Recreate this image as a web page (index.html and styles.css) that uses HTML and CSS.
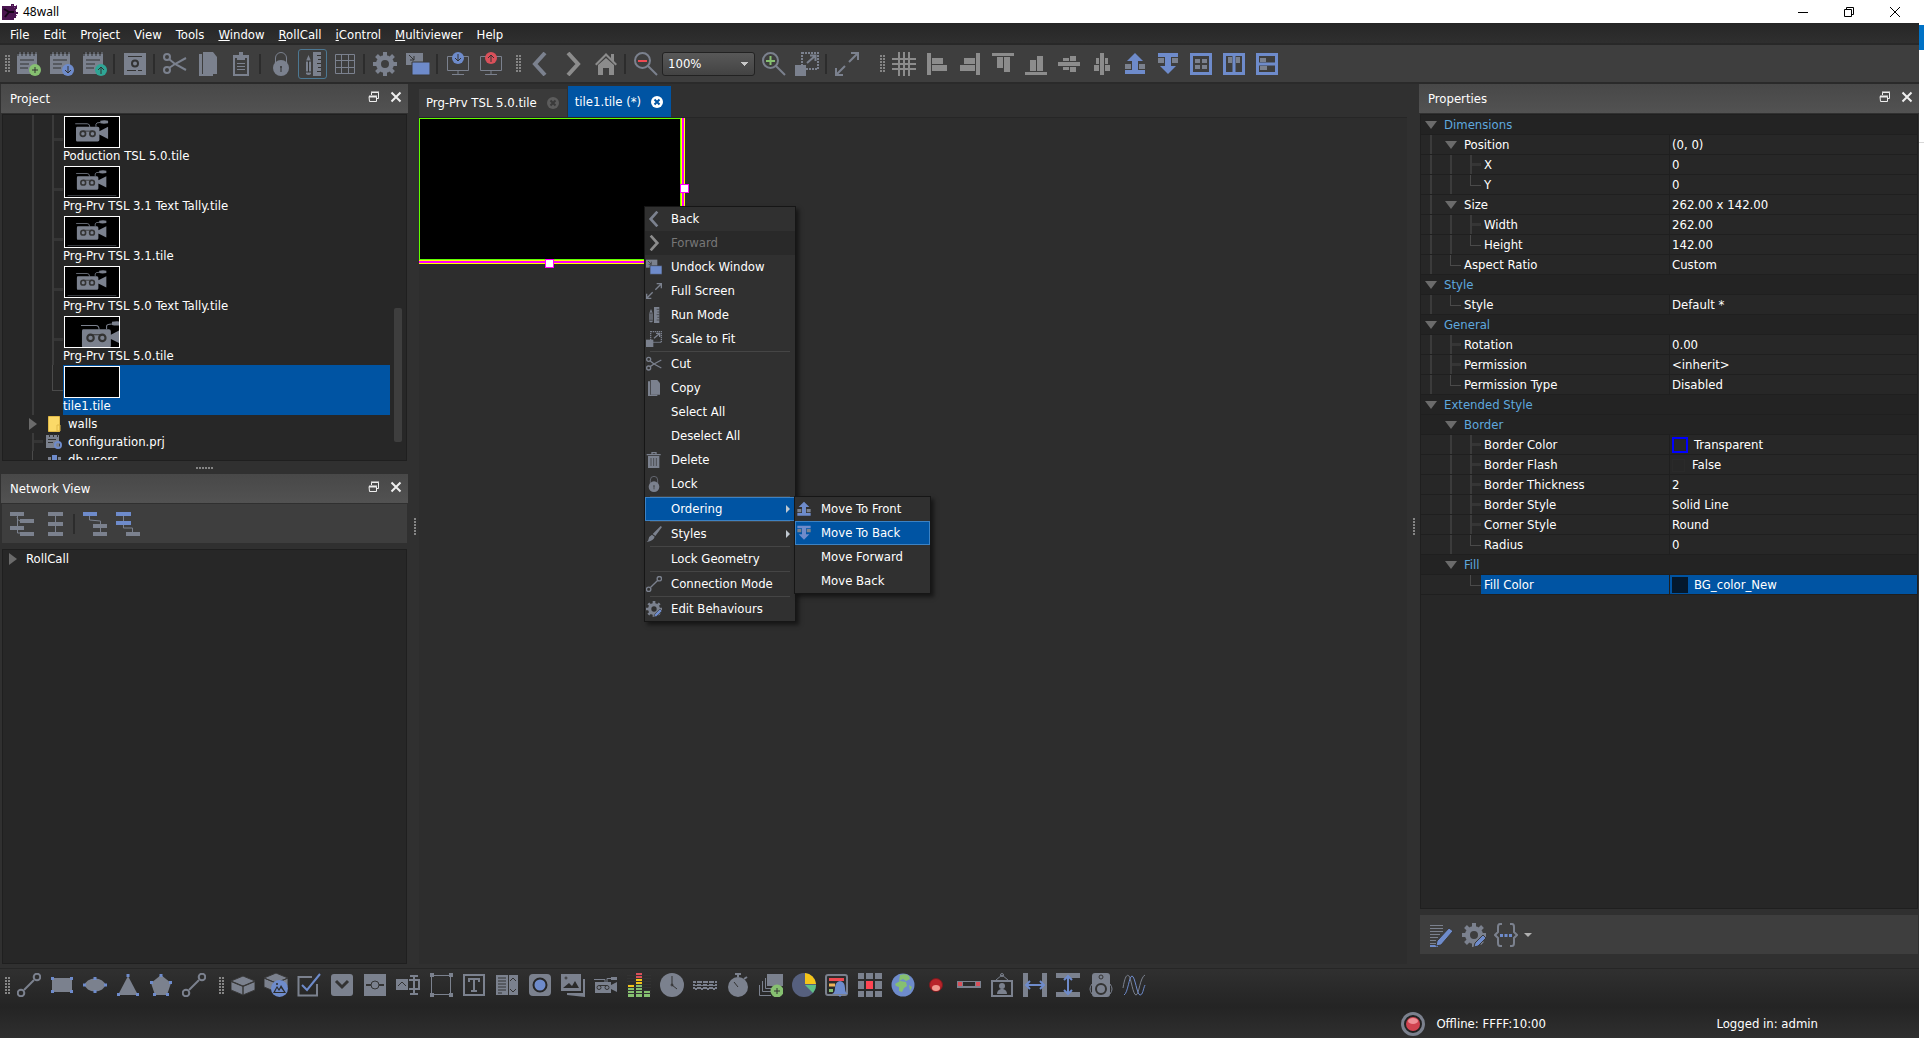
FILE: index.html
```html
<!DOCTYPE html>
<html lang="en">
<head>
<meta charset="utf-8">
<title>48wall</title>
<link rel="stylesheet" href="styles.css">
</head>
<body>
<svg class="defs" aria-hidden="true">
  <symbol id="i-note" viewBox="0 0 24 24"><path class="g" d="M0 2h20v20H0z"/><path class="k" d="M1 0v4M5 0v4M9 0v4M13 0v4M17 0v4M3 8h14M3 12h9M3 16h8"/><path class="gs" d="M3 0v5M7 0v5M11 0v5M15 0v5M19 0v5"/></symbol>
  <symbol id="i-note-add" viewBox="0 0 24 24"><use href="#i-note"/><circle class="green" cx="18" cy="18" r="6"/><path class="k" d="M18 15v6M15 18h6"/></symbol>
  <symbol id="i-note-down" viewBox="0 0 24 24"><use href="#i-note"/><circle class="b" cx="18" cy="18" r="6"/><path class="k" d="M18 14v7M15 18l3 3 3-3"/></symbol>
  <symbol id="i-note-up" viewBox="0 0 24 24"><use href="#i-note"/><circle class="teal" cx="18" cy="18" r="6"/><path class="k" d="M18 22v-7M15 18l3-3 3 3"/></symbol>
  <symbol id="i-disk" viewBox="0 0 24 24"><path class="g" d="M1 1h22v22H1z"/><path class="k" d="M5 4.500h14M4 18.500h9M15 18.500h4"/><circle class="k w2" cx="12" cy="11.500" r="3"/></symbol>
  <symbol id="i-cut" viewBox="0 0 24 24"><circle class="gs w2" cx="4" cy="5" r="3"/><circle class="gs w2" cx="4" cy="18" r="3"/><path class="gs w2" d="M6 7l6 5 11 6M6 16l6-4 11-6"/></symbol>
  <symbol id="i-copy" viewBox="0 0 24 24"><path class="g" d="M3 2h3v20h11v2H3z"/><path class="g" d="M7 0h10l4 5v17H7z"/></symbol>
  <symbol id="i-paste" viewBox="0 0 24 24"><path class="g" fill-rule="evenodd" d="M4 3h16v21H4zM6 6v16h12V6z"/><path class="g" d="M8 4h2V0h4v4h2v4H8z"/><path class="gs" d="M8 11.500h8M8 14.500h8M8 17.500h8"/></symbol>
  <symbol id="i-lock" viewBox="0 0 24 24"><path class="gs" d="M6.500 12V6a5.500 5.500 0 0 1 11 0v6"/><circle class="g" cx="12" cy="16" r="8"/><path class="k" d="M12 14v6M11 15h2"/></symbol>
  <symbol id="i-run" viewBox="0 0 24 24"><path class="g" d="M12 0h8v24h-8z"/><path class="k" d="M16 3.500h4M17 7.500h3M16 11.500h4M17 15.500h3M16 19.500h4"/><path class="g" d="M7.500 3L10 9v13q-2.500 2-5 0V9z"/><path class="k" d="M7.500 9v11M5 9h5M5 20h5"/></symbol>
  <symbol id="i-grid" viewBox="0 0 24 24"><path class="gs" d="M2.500 2.500h19v19h-19zM8.500 2v20M15.500 2v20M2 8.500h20M2 15.500h20"/></symbol>
  <symbol id="i-gear" viewBox="0 0 24 24"><circle class="gs w5" cx="12" cy="12" r="6.500"/><path class="gs w4" d="M12 0v5M12 19v5M0 12h5M19 12h5M3.500 3.500l3.500 3.500M17 17l3.500 3.500M3.500 20.500L7 17M17 7l3.500-3.500"/></symbol>
  <symbol id="i-undock" viewBox="0 0 24 24"><path class="g" d="M0 1h17v12H0z"/><path class="k" d="M3 3l5 5M8 4v4H4"/><path class="b dk" d="M6 10h18v13H6z"/></symbol>
  <symbol id="i-mon-down" viewBox="0 0 24 24"><path class="gs" d="M1.500 4.500h21v14h-21zM12 19v3M6 22.500h12"/><circle class="b" cx="12" cy="6" r="6"/><path class="k" d="M12 2v7M9 6l3 3 3-3"/></symbol>
  <symbol id="i-mon-up" viewBox="0 0 24 24"><path class="gs" d="M1.500 4.500h21v14h-21zM12 19v3M6 22.500h12"/><circle class="red" cx="12" cy="6" r="6"/><path class="k" d="M12 10V3M9 6l3-3 3 3"/></symbol>
  <symbol id="i-left" viewBox="0 0 24 24"><path class="gs w4" d="M17 1L7 12l10 11"/></symbol>
  <symbol id="i-right" viewBox="0 0 24 24"><path class="ls w4" d="M7 1l10 11L7 23"/></symbol>
  <symbol id="i-home" viewBox="0 0 24 24"><path class="l" d="M12 1l11 11-1.500 1.500L12 4l-9.500 9.500L1 12zM4 13l8-7 8 7v10h-5v-7H9v7H4zM17 2h3v7l-3-3z"/></symbol>
  <symbol id="i-zout" viewBox="0 0 24 24"><circle class="gs w2" cx="8.500" cy="8.500" r="7.500"/><path class="gs w2" d="M14 14l9 9"/><path class="reds w2" d="M4 9h9"/></symbol>
  <symbol id="i-zin" viewBox="0 0 24 24"><circle class="gs w2" cx="8.500" cy="8.500" r="7.500"/><path class="gs w2" d="M14 14l9 9"/><path class="greens w2" d="M4 9h9M8.500 4v9"/></symbol>
  <symbol id="i-scale" viewBox="0 0 24 24"><path class="g" d="M0 13h11v11H0z"/><path class="gs dash" d="M7 1h16v16H7z"/><path class="gs w2" d="M12 11l8-7M15 3.500h5.500V9"/></symbol>
  <symbol id="i-full" viewBox="0 0 24 24"><path class="gs w2" d="M1 23l9-9M14 10l9-9M16 1h7v7M1 16v7h7"/></symbol>
  <symbol id="i-hash" viewBox="0 0 24 24"><path class="ls w2" d="M7 0v24M12 0v24M17 0v24M0 7h24M0 12h24M0 17h24"/></symbol>
  <symbol id="i-al-left" viewBox="0 0 24 24"><path class="l" d="M2 1h4v22H2zM7 6h11v6H7zM7 13h15v6H7z"/></symbol>
  <symbol id="i-al-right" viewBox="0 0 24 24"><path class="l" d="M18 1h4v22h-4zM6 6h11v6H6zM2 13h15v6H2z"/></symbol>
  <symbol id="i-al-top" viewBox="0 0 24 24"><path class="l" d="M1 1h22v3H1zM6 5h6v11H6zM13 5h6v15h-6z"/></symbol>
  <symbol id="i-al-bottom" viewBox="0 0 24 24"><path class="l" d="M1 20h22v3H1zM6 8h6v11H6zM13 4h6v15h-6z"/></symbol>
  <symbol id="i-al-mid" viewBox="0 0 24 24"><path class="l" d="M1 10h22v4H1zM6 6h6v3H6zM6 15h6v3H6zM13 4h6v5h-6zM13 15h6v5h-6z"/></symbol>
  <symbol id="i-al-center" viewBox="0 0 24 24"><path class="l" d="M10 1h4v22h-4zM6 6h3v6H6zM15 6h3v6h-3zM4 13h5v6H4zM15 13h5v6h-5z"/></symbol>
  <symbol id="i-front" viewBox="0 0 24 24"><path class="g" d="M2 12h6v5H2zM16 12h6v5h-6z"/><path class="b" d="M12 1l8 8h-5v9h7v4H2v-4h7V9H4z"/></symbol>
  <symbol id="i-toback" viewBox="0 0 24 24"><path class="g" d="M2 6h6v5H2zM16 6h6v5h-6z"/><path class="b" d="M12 22l-8-8h5V5H2V1h20v4h-7v9h5z"/></symbol>
  <symbol id="i-fit" viewBox="0 0 24 24"><path class="bs w3" d="M2.500 2.500h19v19h-19z"/><path class="g" d="M6 7h5v4H6zM13 7h5v4h-5zM6 13h5v4H6zM13 13h5v4h-5z"/></symbol>
  <symbol id="i-dist-h" viewBox="0 0 24 24"><path class="g" d="M6 5h4v6H6zM14 5h4v6h-4z"/><path class="bs w3" d="M2.500 2.500h19v19h-19zM12 2v20"/></symbol>
  <symbol id="i-dist-v" viewBox="0 0 24 24"><path class="g" d="M5 6h6v4H5zM5 14h7v4H5z"/><path class="bs w3" d="M2.500 2.500h19v19h-19zM2 12h20"/></symbol>
  <symbol id="i-delete" viewBox="0 0 24 24"><path class="g" d="M1 3h7V0h8v3h6v2H1zM3 6h17v18H3zM10 2v1h4V2z"/><path class="k" d="M7.500 9v12M11.500 9v12M15.500 9v12"/></symbol>
  <symbol id="i-brush" viewBox="0 0 24 24"><path class="g" d="M22 0l2 1.500L14 15l-4-3zM9 13l4 3q-1 6-12 8 3-2 3-5t5-6z"/></symbol>
  <symbol id="i-link" viewBox="0 0 24 24"><circle class="gs w2" cx="4" cy="20" r="3.300"/><circle class="gs w2" cx="20" cy="4" r="3.300"/><path class="gs w2" d="M7 17L17 7"/></symbol>
  <symbol id="i-gearpen" viewBox="0 0 24 24"><use href="#i-gear"/><path class="b dk" d="M21 12l3 3-8 8-4 1 1-4z"/></symbol>
  <symbol id="i-textpen" viewBox="0 0 24 24"><path class="gs" d="M1 2.500h13M1 5.500h13M1 8.500h13M1 11.500h10M1 14.500h8M1 17.500h6M1 20.500h6"/><path class="bs w2" d="M1 23h8"/><path class="b dk" d="M20 5l4 3L12 22l-5 1 1-5z"/></symbol>
  <symbol id="i-braces" viewBox="0 0 24 24"><path class="gs w2" d="M8 1H6q-2 0-2 3v5L1 12l3 3v5q0 3 2 3h2M16 1h2q2 0 2 3v5l3 3-3 3v5q0 3-2 3h-2"/><path class="b" d="M6 11h3v3H6zM10.500 11h3v3h-3zM15 11h3v3h-3z"/></symbol>
  <symbol id="i-rect" viewBox="0 0 24 24"><path class="g" d="M2 5h20v14H2z"/><path class="b" d="M1 4h3v3H1zM20 4h3v3h-3zM1 17h3v3H1zM20 17h3v3h-3z"/></symbol>
  <symbol id="i-ellipse" viewBox="0 0 24 24"><ellipse class="g" cx="12" cy="12" rx="10" ry="6.500"/><path class="b" d="M10.500 4h3v3h-3zM10.500 17h3v3h-3zM0 10.500h3v3H0zM21 10.500h3v3h-3z"/></symbol>
  <symbol id="i-tri" viewBox="0 0 24 24"><path class="g" d="M12 3l10 19H2z"/><path class="b" d="M10.500 1h3v3h-3zM1 20h3v3H1zM20 20h3v3h-3z"/></symbol>
  <symbol id="i-penta" viewBox="0 0 24 24"><path class="g" d="M12 2l10 8-4 12H6L2 10z"/><path class="b" d="M10.500 1h3v3h-3zM1 8h3v3H1zM20 8h3v3h-3zM4 20h3v3H4zM17 20h3v3h-3z"/></symbol>
  <symbol id="i-cube" viewBox="0 0 24 24"><path class="g dk" d="M12 3l12 5-12 5L0 8zM0 8.500l12 5V22L0 17zM24 8.500l-12 5V22l12-5z"/></symbol>
  <symbol id="i-cubepic" viewBox="0 0 24 24"><path class="g dk" d="M12 0l12 5-12 5L0 5zM0 5l12 5v9L0 14zM24 5l-12 5v9l12-5z"/><circle class="b" cx="15.500" cy="15.500" r="8.500"/><path class="ink" d="M9 20l4-7 2 3 2-4 5 8z"/><path class="b" d="M11 19l2-4 2 3 2-3 3 4z"/><circle class="ink" cx="13" cy="11" r="1"/></symbol>
  <symbol id="i-check" viewBox="0 0 24 24"><path class="gs w2" d="M15 4H1.500v18.500h18.500V11"/><path class="bs w2" d="M5 12l5 5L23 1"/></symbol>
  <symbol id="i-drop" viewBox="0 0 24 24"><rect class="g" x="1" y="1" width="22" height="22" rx="3"/><path class="k w3" d="M6 8l6 6 6-6"/></symbol>
  <symbol id="i-slider" viewBox="0 0 24 24"><path class="g" d="M1 1h22v22H1z"/><path class="k w2" d="M3 12h5M16 12h5"/><circle class="k" cx="12" cy="12" r="4"/></symbol>
  <symbol id="i-rename" viewBox="0 0 24 24"><path class="g" d="M0 6h12v11H0z"/><path class="k" d="M2 13l4-4 4 4"/><path class="gs w2" d="M13 7h10v9H13M18 3v18M14 3h8M14 21h8"/></symbol>
  <symbol id="i-frame" viewBox="0 0 24 24"><path class="gs" d="M2.500 2.500h19v19h-19z"/><path class="g" d="M1 0h4v4H1zM20 0h4v4h-4zM1 20h4v4H1zM20 20h4v4h-4z"/></symbol>
  <symbol id="i-text" viewBox="0 0 24 24"><path class="gs w2" d="M2 2h20v20H2z"/><path class="gs w2" d="M7 9V6h10v3M12 6v12M9 18h6"/></symbol>
  <symbol id="i-list" viewBox="0 0 24 24"><path class="g" d="M1 2h22v20H1z"/><path class="k" d="M13.500 2v20M3 5h8M3 8h8M3 11h8M3 14h8M3 17h8M3 20h4M15 8l3-3 3 3M15 16l3 3 3-3"/></symbol>
  <symbol id="i-button" viewBox="0 0 24 24"><rect class="g" x="1" y="1" width="22" height="22" rx="4"/><circle class="b dk2" cx="12" cy="12" r="6.500"/></symbol>
  <symbol id="i-pics" viewBox="0 0 24 24"><path class="g" d="M24 6v18l-18-2v-2h16V6z"/><path class="g" fill-rule="evenodd" d="M0 1h20v17H0zM2 15h16l-4-7-3 5-3-3z"/><circle class="k" cx="5" cy="5" r="1"/></symbol>
  <symbol id="i-camera" viewBox="0 0 24 24"><path class="g" d="M1 9h16v3l6-3v10l-6-3v4H1zM17 4h6v3h-6z"/><path class="gs" d="M0 6.500h11v3M13 9V5.500h5"/><path class="k" d="M5 12.500h8"/><circle class="k" cx="5" cy="14.500" r="2"/><circle class="k" cx="13" cy="14.500" r="2"/></symbol>
  <symbol id="i-meter" viewBox="0 0 24 24"><path class="red" d="M9 0h6v5H9z"/><path class="yel" d="M9 5h6v7H9zM1 12h6v3H1z"/><path class="green" d="M1 15h6v9H1zM9 12h6v12H9zM17 17h6v7h-6z"/><path class="k" d="M0 2.500h24M0 5.500h24M0 8.500h24M0 11.500h24M0 14.500h24M0 17.500h24M0 20.500h24"/></symbol>
  <symbol id="i-clock" viewBox="0 0 24 24"><circle class="g" cx="12" cy="12" r="12"/><path class="k" d="M12 3v9l5 4"/><circle class="k" cx="12" cy="12" r="1"/></symbol>
  <symbol id="i-digits" viewBox="0 0 24 24"><path class="gs w2 dash" d="M1 9h4v7H1zM7 9h4v7H7zM13 9h4v7h-4zM19 9h4v7h-4z"/><path class="gs" d="M0 12.500h24"/></symbol>
  <symbol id="i-timer" viewBox="0 0 24 24"><circle class="g" cx="12" cy="14" r="10"/><path class="gs w2" d="M9 1h6M12 1v3M18 6l3-2"/><path class="k" d="M12 14L8 9"/></symbol>
  <symbol id="i-stack" viewBox="0 0 24 24"><path class="g" d="M8 1h16v12H8z"/><path class="gs" d="M6.500 5v10.500H16M3.500 8v10.500H12M.5 12v10.500H12"/><circle class="green" cx="18" cy="18" r="6.500"/><path class="k" d="M18 15v6M15 18h6"/></symbol>
  <symbol id="i-pie" viewBox="0 0 24 24"><circle class="slate" cx="12" cy="12" r="12"/><path class="yel" d="M13 0a12 12 0 0 1 11 11H13z"/><path class="emer" d="M13 12h11a12 12 0 0 1-3 8z"/></symbol>
  <symbol id="i-alarm" viewBox="0 0 24 24"><rect class="gs w2" x="1" y="2" width="21" height="20" rx="2"/><path class="reds w3" d="M4 6.500h15"/><path class="ors w3" d="M4 12h6"/><path class="greens w3" d="M4 17.500h4"/><path class="b" d="M7 21q3-1 3-6 0-6 5-7 5 1 5 7 0 5 3 6zM13 22h4l-2 2z"/></symbol>
  <symbol id="i-matrix" viewBox="0 0 24 24"><path class="g" d="M0 0h6v6H0zM8 0h7v6H8zM17 0h7v6h-7zM0 8h6v8H0zM17 8h7v8h-7zM0 18h6v6H0zM8 18h7v6H8zM17 18h7v6h-7z"/><path class="hot" d="M8 8h7v8H8z"/></symbol>
  <symbol id="i-globe" viewBox="0 0 24 24"><circle class="b" cx="12" cy="12" r="11.500"/><path class="green" d="M9 2q6-2 9 1l1 3-4 2-3-2-4 2zM4 11l5-3 6 1 1 4-3 2-2 4-3-1v-4l-3-1zM18 12l3 2-2 4z"/></symbol>
  <symbol id="i-led" viewBox="0 0 24 24"><circle class="led" cx="12" cy="12" r="6.500"/><ellipse class="shine" cx="12" cy="15" rx="4" ry="3"/></symbol>
  <symbol id="i-bar" viewBox="0 0 24 24"><path class="g" d="M0 8h24v7H0z"/><path class="red" d="M1 9h4v4H1zM19 9h4v4h-4z"/><path class="ink" d="M6 9h12v4H6z"/></symbol>
  <symbol id="i-portrait" viewBox="0 0 24 24"><path class="gs w2" d="M2 8h20v15H2z"/><path class="gs" d="M6 7l6-5 6 5"/><circle class="gs" cx="12" cy="2" r="1.500"/><circle class="g" cx="12" cy="13" r="3"/><path class="g" d="M7 21q0-4 4-5h2q4 1 4 5z"/></symbol>
  <symbol id="i-hspan" viewBox="0 0 24 24"><path class="g" d="M0 0h5v24H0zM19 0h5v24h-5z"/><path class="bs w2" d="M3 12h18M7 8l-4 4 4 4M17 8l4 4-4 4"/></symbol>
  <symbol id="i-vspan" viewBox="0 0 24 24"><path class="g" d="M0 0h24v5H0zM0 19h24v5H0z"/><path class="bs w2" d="M12 3v18M8 7l4-4 4 4M8 17l4 4 4-4"/></symbol>
  <symbol id="i-speaker" viewBox="0 0 24 24"><rect class="g" x="3" y="0" width="18" height="24" rx="3"/><circle class="k w2" cx="12" cy="16" r="5"/><circle class="k" cx="12" cy="4" r="2"/><path class="gs" d="M3 11q-4 5 0 10M21 11q4 5 0 10"/></symbol>
  <symbol id="i-wave" viewBox="0 0 24 24"><path class="gs" d="M1 15C3 3 5 1 7 3s4 19 7 19S18 4 23 2"/><path class="bs" d="M2 22C6 20 7 3 10 3s5 19 8 19 3-6 5-10"/></symbol>
  <symbol id="i-net1" viewBox="0 0 24 24"><path class="gs" d="M7.500 3v18h3M7 5q0 3 3 4"/><path class="g" d="M0 0h14v4H0zM10 7h14v4H10zM0 14h14v4H0zM10 20h14v4H10z"/></symbol>
  <symbol id="i-net2" viewBox="0 0 24 24"><path class="gs" d="M12.500 3v18"/><path class="g" d="M5 0h15v4H5zM5 10h15v4H5zM5 20h15v4H5z"/></symbol>
  <symbol id="i-net3" viewBox="0 0 24 24"><path class="gs" d="M6.500 3v5l11 1v13"/><path class="b" d="M0 0h14v4H0z"/><path class="g" d="M10 12h14v4H10zM10 20h14v4H10z"/></symbol>
  <symbol id="i-net4" viewBox="0 0 24 24"><path class="gs" d="M7.500 3v13h9v5"/><path class="b" d="M0 0h15v4H0zM0 9h15v4H0z"/><path class="g" d="M10 20h14v4H10z"/></symbol>
  <symbol id="i-float" viewBox="0 0 12 12"><path class="ws" d="M3.500 4V1.500h7v6H9"/><path class="ws" d="M1 5.500h7.500v5H1.500zM1 6h7"/><path class="ws" d="M3 1h8M1 5h8"/></symbol>
  <symbol id="i-x" viewBox="0 0 12 12"><path class="ws w2" d="M1.500 1.500l9 9M10.500 1.500l-9 9"/></symbol>
  <symbol id="i-cfg" viewBox="0 0 16 16"><path class="g" d="M0 1h13v13H0z"/><path class="k" d="M2 5.500h8M2 8.500h5M3.500 0v3M7.500 0v3M11.500 0v3"/><circle class="bs w2" cx="12" cy="11" r="3"/></symbol>
  <symbol id="i-cam" viewBox="0 0 40 28"><path class="g" d="M2 8h24q2 0 2 2v3l10-5v14l-10-5v6q0 2-2 2H2q-1 0-1-2V10q0-2 1-2zM29 1q5-1 9 0v3q-5 1-9 0z"/><path class="gs" d="M0 4.500h14q3 0 3 4M24 8V5q0-2 5-2"/><circle class="k w2" cx="9" cy="16" r="3"/><circle class="k w2" cx="20" cy="16" r="3"/><path class="k" d="M9 13h11"/></symbol>
</svg>

<div class="desktop">
<div class="window">
  <header class="titlebar">
    <svg class="logo" viewBox="0 0 16 16"><path fill="#4a1550" d="M0 2h9v-2h3v2h3v3h-1v3h2v2h-2v4h-2v2H0z"/><path fill="#8a4a93" d="M12 3h1v1h-1zM14 1h1v1h-1zM13 6h1v1h-1zM14 11h1v1h-1zM10 1h1v1h-1z"/><path stroke="#16051a" stroke-width="2" fill="none" d="M2 5l5 3 5 0M7 8l-4 5"/></svg>
    <span class="title">48wall</span>
    <button class="wbtn" aria-label="Minimize"><svg viewBox="0 0 10 10"><path d="M0 5.500h10"/></svg></button>
    <button class="wbtn" aria-label="Restore"><svg viewBox="0 0 10 10"><path d="M.5 2.500h7v7h-7zM2.500 2V.5h7v7H8"/></svg></button>
    <button class="wbtn" aria-label="Close"><svg viewBox="0 0 10 10"><path d="M0 0l10 10M10 0L0 10"/></svg></button>
  </header>
  <nav class="menubar">
    <button>File</button><button>Edit</button><button>Project</button><button>View</button><button>Tools</button><button><u>W</u>indow</button><button><u>R</u>ollCall</button><button><u>i</u>Control</button><button><u>M</u>ultiviewer</button><button>Help</button>
  </nav>
  <div class="toolbar">
    <i class="grip first"></i>
    <button aria-label="New"><svg><use href="#i-note-add"/></svg></button>
    <button aria-label="Import"><svg><use href="#i-note-down"/></svg></button>
    <button aria-label="Export"><svg><use href="#i-note-up"/></svg></button>
    <i class="sep"></i>
    <button aria-label="Save"><svg><use href="#i-disk"/></svg></button>
    <i class="sep"></i>
    <button aria-label="Cut"><svg><use href="#i-cut"/></svg></button>
    <button aria-label="Copy"><svg><use href="#i-copy"/></svg></button>
    <button aria-label="Paste"><svg><use href="#i-paste"/></svg></button>
    <i class="sep"></i>
    <button aria-label="Lock"><svg><use href="#i-lock"/></svg></button>
    <button class="on" aria-label="Run mode"><svg><use href="#i-run"/></svg></button>
    <button aria-label="Grid"><svg><use href="#i-grid"/></svg></button>
    <i class="sep"></i>
    <button aria-label="Settings"><svg><use href="#i-gear"/></svg></button>
    <button aria-label="Undock"><svg><use href="#i-undock"/></svg></button>
    <i class="sep"></i>
    <button aria-label="Pull"><svg><use href="#i-mon-down"/></svg></button>
    <button aria-label="Push"><svg><use href="#i-mon-up"/></svg></button>
    <i class="grip"></i>
    <button aria-label="Back"><svg><use href="#i-left"/></svg></button>
    <button aria-label="Forward"><svg><use href="#i-right"/></svg></button>
    <button aria-label="Home"><svg><use href="#i-home"/></svg></button>
    <i class="sep"></i>
    <button aria-label="Zoom out"><svg><use href="#i-zout"/></svg></button>
    <select class="zoom" aria-label="Zoom"><option>100%</option></select>
    <button aria-label="Zoom in"><svg><use href="#i-zin"/></svg></button>
    <button aria-label="Scale to fit"><svg><use href="#i-scale"/></svg></button>
    <i class="sep"></i>
    <button aria-label="Full screen"><svg><use href="#i-full"/></svg></button>
    <i class="grip wide"></i>
    <button aria-label="Snap"><svg><use href="#i-hash"/></svg></button>
    <button aria-label="Align left"><svg><use href="#i-al-left"/></svg></button>
    <button aria-label="Align right"><svg><use href="#i-al-right"/></svg></button>
    <button aria-label="Align top"><svg><use href="#i-al-top"/></svg></button>
    <button aria-label="Align bottom"><svg><use href="#i-al-bottom"/></svg></button>
    <button aria-label="Align middle"><svg><use href="#i-al-mid"/></svg></button>
    <button aria-label="Align centre"><svg><use href="#i-al-center"/></svg></button>
    <button aria-label="Move to front"><svg><use href="#i-front"/></svg></button>
    <button aria-label="Move to back"><svg><use href="#i-toback"/></svg></button>
    <button aria-label="Fit"><svg><use href="#i-fit"/></svg></button>
    <button aria-label="Distribute horizontally"><svg><use href="#i-dist-h"/></svg></button>
    <button aria-label="Distribute vertically"><svg><use href="#i-dist-v"/></svg></button>
  </div>

  <main class="work">
    <aside class="left">
      <div class="dockhead"><h2>Project</h2><button aria-label="Float"><svg><use href="#i-float"/></svg></button><button aria-label="Close"><svg><use href="#i-x"/></svg></button></div>
      <div class="box project">
        <ul class="tiles">
          <li><i class="gd v"></i><i class="gd t"></i><div class="tile"><svg class="thumb" viewBox="0 0 56 32"><use href="#i-cam" x="10" y="3" width="37" height="26"/></svg><span>Poduction TSL 5.0.tile</span></div></li>
          <li><i class="gd v"></i><i class="gd t"></i><div class="tile"><svg class="thumb" viewBox="0 0 56 32"><use href="#i-cam" x="11" y="3" width="34" height="24"/><path class="gs" d="M2 30.500h52" opacity=".5"/></svg><span>Prg-Prv TSL 3.1 Text Tally.tile</span></div></li>
          <li><i class="gd v"></i><i class="gd t"></i><div class="tile"><svg class="thumb" viewBox="0 0 56 32"><use href="#i-cam" x="11" y="3" width="34" height="24"/><path class="gs" d="M2 30.500h52" opacity=".5"/></svg><span>Prg-Prv TSL 3.1.tile</span></div></li>
          <li><i class="gd v"></i><i class="gd t"></i><div class="tile"><svg class="thumb" viewBox="0 0 56 32"><use href="#i-cam" x="11" y="3" width="34" height="24"/><path class="gs" d="M2 30.500h52" opacity=".5"/></svg><span>Prg-Prv TSL 5.0 Text Tally.tile</span></div></li>
          <li><i class="gd v"></i><i class="gd t"></i><div class="tile"><svg class="thumb" viewBox="0 0 56 32"><use href="#i-cam" x="16" y="4" width="46" height="32"/></svg><span>Prg-Prv TSL 5.0.tile</span></div></li>
          <li><i class="gd v"></i><i class="gd l"></i><div class="tile sel"><svg class="thumb" viewBox="0 0 56 32"></svg><span>tile1.tile</span></div></li>
          <li class="leaf"><i class="gd a"></i><svg class="small" viewBox="0 0 16 16"><path fill="#fbd968" stroke="#e0b948" d="M2.500.5h11v15h-11zM11 9h3v6h-3z"/></svg>walls</li>
          <li class="leaf"><i class="gd t"></i><svg class="small"><use href="#i-cfg"/></svg>configuration.prj</li>
          <li class="leaf"><i class="gd l"></i><svg class="small" viewBox="0 0 16 16"><path class="g" d="M2 5h3v9H2zM12 5h3v9h-3z"/><path class="b" d="M6 3h5v5l-2 4H8L6 8z"/></svg>db.users</li>
        </ul>
        <div class="scroll"></div>
      </div>
      <div class="split-h"><i></i></div>
      <div class="dockhead"><h2>Network View</h2><button aria-label="Float"><svg><use href="#i-float"/></svg></button><button aria-label="Close"><svg><use href="#i-x"/></svg></button></div>
      <div class="minibar net">
        <button aria-label="Tree"><svg><use href="#i-net1"/></svg></button>
        <button aria-label="List"><svg><use href="#i-net2"/></svg></button>
        <i class="sep"></i>
        <button aria-label="Expand one"><svg><use href="#i-net3"/></svg></button>
        <button aria-label="Expand two"><svg><use href="#i-net4"/></svg></button>
      </div>
      <div class="box network"><ul><li class="leaf"><i class="gd a"></i>RollCall</li></ul></div>
    </aside>

    <div class="split-v"><i></i></div>

    <section class="center">
      <div class="tabs">
        <div class="tab"><button>Prg-Prv TSL 5.0.tile</button><button class="tx" aria-label="Close tab"><svg viewBox="0 0 12 12"><circle cx="6" cy="6" r="6" fill="#5c5c5c"/><path stroke="#3a3a3a" stroke-width="2" d="M3.500 3.500l5 5M8.500 3.500l-5 5"/></svg></button></div>
        <div class="tab active"><button>tile1.tile (*)</button><button class="tx" aria-label="Close tab"><svg viewBox="0 0 12 12"><circle cx="6" cy="6" r="6" fill="#fff"/><path stroke="#0054a3" stroke-width="2" d="M3.500 3.500l5 5M8.500 3.500l-5 5"/></svg></button></div>
      </div>
      <div class="canvas">
        <div class="sel1"><div class="sel2"><div class="sel3"><div class="widget"></div></div></div></div>
        <i class="knob east"></i><i class="knob south"></i>
        <div class="menu ctx">
          <button><svg><use href="#i-left"/></svg>Back</button>
          <button disabled><svg><use href="#i-right"/></svg>Forward</button>
          <button><svg><use href="#i-undock"/></svg>Undock Window</button>
          <button><svg><use href="#i-full"/></svg>Full Screen</button>
          <button><svg><use href="#i-run"/></svg>Run Mode</button>
          <button><svg><use href="#i-scale"/></svg>Scale to Fit</button>
          <hr>
          <button><svg><use href="#i-cut"/></svg>Cut</button>
          <button><svg><use href="#i-copy"/></svg>Copy</button>
          <button><svg></svg>Select All</button>
          <button><svg></svg>Deselect All</button>
          <button><svg><use href="#i-delete"/></svg>Delete</button>
          <button><svg><use href="#i-lock"/></svg>Lock</button>
          <hr>
          <button class="hi sub"><svg></svg>Ordering</button>
          <hr>
          <button class="sub"><svg><use href="#i-brush"/></svg>Styles</button>
          <hr>
          <button><svg></svg>Lock Geometry</button>
          <hr>
          <button><svg><use href="#i-link"/></svg>Connection Mode</button>
          <hr>
          <button><svg><use href="#i-gearpen"/></svg>Edit Behaviours</button>
        </div>
        <div class="menu submenu">
          <button><svg><use href="#i-front"/></svg>Move To Front</button>
          <button class="hi"><svg><use href="#i-toback"/></svg>Move To Back</button>
          <button><svg></svg>Move Forward</button>
          <button><svg></svg>Move Back</button>
        </div>
      </div>
    </section>

    <div class="split-v"><i></i></div>

    <aside class="right">
      <div class="dockhead"><h2>Properties</h2><button aria-label="Float"><svg><use href="#i-float"/></svg></button><button aria-label="Close"><svg><use href="#i-x"/></svg></button></div>
      <div class="box props">
        <table>
          <tr class="sec"><td colspan="2"><div><i class="gd a"></i><span>Dimensions</span></div></td></tr>
          <tr><td><div><i class="gd v"></i><i class="gd a"></i><span>Position</span></div></td><td>(0, 0)</td></tr>
          <tr><td><div><i class="gd v"></i><i class="gd v"></i><i class="gd t"></i><span>X</span></div></td><td>0</td></tr>
          <tr><td><div><i class="gd v"></i><i class="gd v"></i><i class="gd l"></i><span>Y</span></div></td><td>0</td></tr>
          <tr><td><div><i class="gd v"></i><i class="gd a"></i><span>Size</span></div></td><td>262.00 x 142.00</td></tr>
          <tr><td><div><i class="gd v"></i><i class="gd v"></i><i class="gd t"></i><span>Width</span></div></td><td>262.00</td></tr>
          <tr><td><div><i class="gd v"></i><i class="gd v"></i><i class="gd l"></i><span>Height</span></div></td><td>142.00</td></tr>
          <tr><td><div><i class="gd v"></i><i class="gd l"></i><span>Aspect Ratio</span></div></td><td>Custom</td></tr>
          <tr class="sec"><td colspan="2"><div><i class="gd a"></i><span>Style</span></div></td></tr>
          <tr><td><div><i class="gd v"></i><i class="gd l"></i><span>Style</span></div></td><td>Default *</td></tr>
          <tr class="sec"><td colspan="2"><div><i class="gd a"></i><span>General</span></div></td></tr>
          <tr><td><div><i class="gd v"></i><i class="gd t"></i><span>Rotation</span></div></td><td>0.00</td></tr>
          <tr><td><div><i class="gd v"></i><i class="gd t"></i><span>Permission</span></div></td><td>&lt;inherit&gt;</td></tr>
          <tr><td><div><i class="gd v"></i><i class="gd l"></i><span>Permission Type</span></div></td><td>Disabled</td></tr>
          <tr class="sec"><td colspan="2"><div><i class="gd a"></i><span>Extended Style</span></div></td></tr>
          <tr class="sec"><td colspan="2"><div><i class="gd"></i><i class="gd a"></i><span>Border</span></div></td></tr>
          <tr><td><div><i class="gd"></i><i class="gd v"></i><i class="gd t"></i><span>Border Color</span></div></td><td><div><i class="swatch"></i>Transparent</div></td></tr>
          <tr><td><div><i class="gd"></i><i class="gd v"></i><i class="gd t"></i><span>Border Flash</span></div></td><td><label><input type="checkbox">False</label></td></tr>
          <tr><td><div><i class="gd"></i><i class="gd v"></i><i class="gd t"></i><span>Border Thickness</span></div></td><td>2</td></tr>
          <tr><td><div><i class="gd"></i><i class="gd v"></i><i class="gd t"></i><span>Border Style</span></div></td><td>Solid Line</td></tr>
          <tr><td><div><i class="gd"></i><i class="gd v"></i><i class="gd t"></i><span>Corner Style</span></div></td><td>Round</td></tr>
          <tr><td><div><i class="gd"></i><i class="gd v"></i><i class="gd l"></i><span>Radius</span></div></td><td>0</td></tr>
          <tr class="sec"><td colspan="2"><div><i class="gd"></i><i class="gd a"></i><span>Fill</span></div></td></tr>
          <tr class="cur"><td><div><i class="gd"></i><i class="gd"></i><i class="gd l"></i><span>Fill Color</span></div></td><td><div><i class="swatch navy"></i>BG_color_New</div></td></tr>
        </table>
      </div>
      <div class="minibar edit">
        <button aria-label="Edit script"><svg><use href="#i-textpen"/></svg></button>
        <button aria-label="Edit behaviours"><svg><use href="#i-gearpen"/></svg></button>
        <button class="more" aria-label="Variables"><svg><use href="#i-braces"/></svg></button>
      </div>
    </aside>
  </main>

  <footer class="bottom">
    <div class="toolbar shapes">
      <i class="grip first"></i>
      <button aria-label="Line"><svg><use href="#i-link"/></svg></button>
      <button aria-label="Rectangle"><svg><use href="#i-rect"/></svg></button>
      <button aria-label="Ellipse"><svg><use href="#i-ellipse"/></svg></button>
      <button aria-label="Triangle"><svg><use href="#i-tri"/></svg></button>
      <button aria-label="Polygon"><svg><use href="#i-penta"/></svg></button>
      <button aria-label="Connector"><svg><use href="#i-link"/></svg></button>
      <i class="grip"></i>
      <button aria-label="Box"><svg><use href="#i-cube"/></svg></button>
      <button aria-label="Box image"><svg><use href="#i-cubepic"/></svg></button>
      <button aria-label="Checkbox"><svg><use href="#i-check"/></svg></button>
      <button aria-label="Drop-down"><svg><use href="#i-drop"/></svg></button>
      <button aria-label="Slider"><svg><use href="#i-slider"/></svg></button>
      <button aria-label="Spin box"><svg><use href="#i-rename"/></svg></button>
      <button aria-label="Frame"><svg><use href="#i-frame"/></svg></button>
      <button aria-label="Text"><svg><use href="#i-text"/></svg></button>
      <button aria-label="List"><svg><use href="#i-list"/></svg></button>
      <button aria-label="Button"><svg><use href="#i-button"/></svg></button>
      <button aria-label="Pictures"><svg><use href="#i-pics"/></svg></button>
      <button aria-label="Video"><svg><use href="#i-camera"/></svg></button>
      <button aria-label="Meter"><svg><use href="#i-meter"/></svg></button>
      <button aria-label="Clock"><svg><use href="#i-clock"/></svg></button>
      <button aria-label="Digital clock"><svg><use href="#i-digits"/></svg></button>
      <button aria-label="Timer"><svg><use href="#i-timer"/></svg></button>
      <button aria-label="Stack"><svg><use href="#i-stack"/></svg></button>
      <button aria-label="Pie"><svg><use href="#i-pie"/></svg></button>
      <button aria-label="Alarms"><svg><use href="#i-alarm"/></svg></button>
      <button aria-label="Matrix"><svg><use href="#i-matrix"/></svg></button>
      <button aria-label="Web"><svg><use href="#i-globe"/></svg></button>
      <button aria-label="LED"><svg><use href="#i-led"/></svg></button>
      <button aria-label="Tally bar"><svg><use href="#i-bar"/></svg></button>
      <button aria-label="Portrait"><svg><use href="#i-portrait"/></svg></button>
      <button aria-label="Horizontal spacer"><svg><use href="#i-hspan"/></svg></button>
      <button aria-label="Vertical spacer"><svg><use href="#i-vspan"/></svg></button>
      <button aria-label="Speaker"><svg><use href="#i-speaker"/></svg></button>
      <button aria-label="Waveform"><svg><use href="#i-wave"/></svg></button>
    </div>
    <div class="status">
      <svg viewBox="0 0 24 24"><circle cx="12" cy="12" r="10.500" fill="#222" stroke="#7b818e" stroke-width="3"/><circle cx="12" cy="12" r="7" fill="#d04350"/><ellipse cx="12" cy="9" rx="5" ry="3" fill="#ee8f96"/></svg>
      <span class="host">Offline: FFFF:10:00</span>
      <span class="user">Logged in: admin</span>
    </div>
  </footer>
</div>
<div class="behind"><i></i></div>
</div>
</body>
</html>
```
FILE: styles.css
```css
* { box-sizing: border-box; }
body {
  margin: 0;
  background: #fff;
  color: #fff;
  font: 13px/16px "DejaVu Sans Condensed", "Noto Sans", sans-serif;
}
button, select, input { font: inherit; color: inherit; margin: 0; }
button { background: none; border: 0; padding: 0; }
ul { list-style: none; margin: 0; padding: 0; }
h2 { margin: 0; font-size: 13px; font-weight: 400; flex: 1; }
svg { display: block; flex: none; }
.defs { position: absolute; width: 0; height: 0; }

/* icon paints */
.g { fill: #7b818e; }
.l { fill: #8c8c8c; }
.b { fill: #6e8bcb; }
.green { fill: #86c070; }
.teal { fill: #2fa595; }
.red { fill: #d9505a; }
.yel { fill: #f5c518; }
.emer { fill: #5fbf85; }
.slate { fill: #56607e; }
.hot { fill: #ff4553; }
.ink { fill: #2a2a2a; }
.led { fill: #b8242a; stroke: #7a1a1e; }
.shine { fill: #f0998f; }
.gs, .ls, .bs, .k, .reds, .greens, .ors, .ws { fill: none; stroke-width: 1; }
.gs { stroke: #7b818e; }
.ls { stroke: #8c8c8c; }
.bs { stroke: #6e8bcb; }
.k { stroke: #333; }
.reds { stroke: #ee4a52; }
.greens { stroke: #86c070; }
.ors { stroke: #eeb35a; }
.ws { stroke: #eee; }
.w2 { stroke-width: 2; }
.w3 { stroke-width: 3; }
.w4 { stroke-width: 4; }
.w5 { stroke-width: 5; }
.dash { stroke-dasharray: 2 1; stroke-width: 2; }
.dk { stroke: #383838; stroke-width: 1; }
.dk2 { stroke: #262626; stroke-width: 2; }

.desktop { display: flex; min-height: 100vh; }
.window { flex: 1; min-width: 0; display: flex; flex-direction: column; background: #303030; }
.behind { width: 5px; background: linear-gradient(#fff 142px, #d8d8d8 142px, #d8d8d8 143px, #fff 143px); padding-top: 25px; }
.behind i { display: block; height: 25px; background: #0072c6; }

.titlebar { display: flex; height: 23px; background: #fff; color: #000; align-items: center; }
.logo { width: 16px; height: 16px; margin: 0 5px 0 2px; }
.title { flex: 1; font-family: "Noto Sans", sans-serif; font-size: 12px; }
.wbtn { width: 46px; height: 22px; display: grid; place-items: center; }
.wbtn:last-child { margin-right: 1px; }
.wbtn svg { width: 10px; height: 10px; fill: none; stroke: #000; }

.menubar { display: flex; height: 22px; padding: 4px 0 0 3px; background: linear-gradient(#262626, #2f2f2f); border-bottom: 2px solid #282828; }
.menubar button { padding: 0 7px; white-space: nowrap; }

.toolbar { display: flex; align-items: center; height: 39px; background: #3e3e3e; border-bottom: 2px solid #2a2a2a; }
.toolbar button { width: 33px; height: 30px; display: grid; place-items: center; flex: none; }
.toolbar button svg, .minibar button svg { width: 24px; height: 24px; }
.toolbar .on { position: relative; width: 31px; }
.toolbar .on::after { content: ""; position: absolute; inset: 0 1px; border: 1px solid #4c7893; border-radius: 3px; }
.sep { width: 7px; height: 20px; flex: none; background: linear-gradient(#2c2c2c, #2c2c2c) 2px 0 / 2px 100% no-repeat; }
.grip { width: 16px; height: 17px; padding-left: 9px; flex: none; }
.grip::before, .split-v i, .split-h i {
  content: ""; display: block; width: 5px; height: 17px;
  background: conic-gradient(from 270deg at 2px 2px, #858585 90deg, transparent 0) 0 0 / 3px 3px;
}
.grip.first { width: 12px; padding-left: 5px; }
.grip.wide { width: 24px; padding-left: 17px; }
.zoom {
  appearance: none; width: 93px; height: 24px; margin-right: 2px; padding: 0 5px;
  border: 1px solid #222; border-radius: 3px;
  background: conic-gradient(from 315deg at 4px 4px, #c8c8c8 90deg, transparent 0) right 6px center / 8px 4px no-repeat,
    linear-gradient(#585858, #434343);
}

.work { flex: 1; display: flex; min-height: 0; padding-bottom: 4px; }
.left { width: 408px; display: flex; flex-direction: column; padding-left: 1px; }
.right { width: 501px; display: flex; flex-direction: column; padding: 0 0 10px 1px; }
.dockhead { display: flex; align-items: center; height: 29px; padding: 0 6px 0 9px; gap: 10px; background: linear-gradient(#484848, #525252); flex: none; }
.dockhead button { margin-bottom: 3px; }
.dockhead svg { width: 12px; height: 12px; }
.box { background: #272727; border: 1px solid #1f1f1f; margin: 1px 1px 0; overflow: hidden; }
.split-h { height: 13px; display: grid; place-items: center; flex: none; }
.split-h i { width: 17px; height: 2px; }
.split-v { width: 11px; padding-top: 434px; flex: none; }
.split-v i { width: 2px; margin-left: 6px; }

/* tree guides */
.gd { width: 20px; align-self: stretch; flex: none; position: relative; }
.gd.v, .gd.t { background: linear-gradient(#3b3b3b, #3b3b3b) 9px 0 / 2px 100% no-repeat; }
.gd.t::after { content: ""; position: absolute; left: 11px; right: 0; top: calc(50% - 2px); height: 3px; background: #353535; }
.gd.l::after { content: ""; position: absolute; left: 9px; right: 0; top: 0; height: 50%; border: solid #4a4a4a; border-width: 0 0 1px 1px; }
.gd.a::after { content: ""; position: absolute; left: 4px; top: 6px; border: solid transparent; border-width: 8px 6px 0; border-top-color: #6b6b6b; }
.leaf .gd.a::after { left: 6px; top: 3px; border-width: 6px 0 6px 8px; border-color: transparent transparent transparent #6b6b6b; }

.project { height: 347px; flex: none; display: flex; }
.tiles { flex: 1; padding-left: 20px; }
.tiles li { display: flex; height: 50px; }
.tile { flex: 1; padding-top: 1px; }
.tile .thumb { width: 56px; height: 32px; margin-left: 1px; background: #000; border: 1px solid #fff; }
.tile span { display: block; line-height: 15px; }
.sel { background: #0054a3; }
.tiles .leaf { height: 18px; align-items: center; }
.small { width: 16px; height: 16px; margin: 0 6px 0 3px; }
.scroll { width: 8px; margin: 193px 4px 18px; border-radius: 2px; background: #3e3e3e; }

.minibar { display: flex; align-items: center; height: 39px; margin: 1px 1px 0; background: #3e3e3e; flex: none; }
.minibar button { width: 33px; display: grid; place-items: center; }
.net { padding-left: 3px; }
.network { flex: 1; margin-top: 6px; }
.network .leaf { display: flex; height: 18px; gap: 3px; align-items: center; }

.center { flex: 1; min-width: 0; display: flex; flex-direction: column; }
.tabs { display: flex; height: 33px; padding-top: 2px; align-items: flex-end; gap: 1px; }
.tab { display: flex; align-items: center; gap: 10px; height: 28px; padding: 0 8px 0 7px; background: #3a3a3a; }
.tab.active { height: 31px; background: #0054a3; }
.tx svg { width: 12px; height: 12px; }
.canvas { flex: 1; position: relative; background: #2d2d2d; border-top: 1px solid #262626; }
.sel1, .sel2, .sel3 { width: max-content; border: 0 solid #ff0; border-width: 0 1px 1px 0; }
.sel2 { border-color: #f0f; border-width: 0 2px 2px 0; }
.widget { width: 262px; height: 142px; background: #000; border: 1px solid #60ff00; }
.knob { position: absolute; width: 9px; height: 9px; background: #fff; border: 1px solid #f0f; }
.east { left: 261px; top: 66px; }
.south { left: 126px; top: 141px; }

.menu { position: absolute; background: #303030; border: 1px solid #161616; box-shadow: 3px 3px 4px rgba(0, 0, 0, .5); }
.ctx { left: 225px; top: 88px; width: 152px; }
.submenu { left: 375px; top: 378px; width: 137px; }
.menu button { display: flex; align-items: center; width: 100%; height: 24px; gap: 9px; padding: 0; text-align: left; white-space: nowrap; border: 1px solid transparent; }
.menu svg { width: 16px; height: 16px; }
.menu button:disabled { color: #777; background: #292929; }
.menu .hi { background: #0054a3; border-color: #3c82c4; }
.menu .sub::after { content: ""; margin-left: auto; margin-right: 4px; border: solid transparent; border-width: 4px 0 4px 4px; border-left-color: #c0c8d0; }
.menu hr { margin: 0 5px; border: 0; height: 1px; background: #454545; }

.props { flex: 1; }
.props table { width: 100%; table-layout: fixed; border-spacing: 0; }
.props td { height: 20px; padding: 1px 0 0 2px; line-height: 18px; border-bottom: 1px solid #1f1f1f; border-left: 1px solid #1f1f1f; }
.props td:first-child { padding: 0; border-left: 0; }
.props td div { display: flex; height: 19px; align-items: center; }
.props td:last-child:not(:first-child) div { height: 18px; }
.props td span { flex: 1; padding: 1px 0 0 3px; line-height: 18px; }
.props .sec td { background: #232323; color: #5fa8de; }
.cur span, .cur td:last-child { background: #0054a3; }
.swatch { width: 16px; height: 16px; margin-right: 6px; border: 2px solid #00f; }
.swatch.navy { background: #04182c; border-color: #04182c; }
.props label { display: flex; align-items: center; }
.props input { appearance: none; width: 13px; height: 13px; margin-right: 7px; border: 1px solid #2a2a2a; }
.edit { margin-top: 6px; padding-left: 4px; }
.edit .more { display: flex; align-items: center; width: 46px; padding-left: 4px; gap: 6px; }
.more::after { content: ""; border: solid transparent; border-width: 4px 4px 0; border-top-color: #b0b0b0; }

.bottom { background: linear-gradient(#303030, #242424 55%, #2f2f2f); border-top: 1px solid #262626; flex: none; }
.shapes { height: 32px; background: none; border: 0; }
.status { display: flex; align-items: center; justify-content: flex-end; height: 37px; padding: 9px 101px 0 0; }
.status svg { width: 24px; height: 24px; margin-right: 11px; }
.host { width: 280px; }
```
